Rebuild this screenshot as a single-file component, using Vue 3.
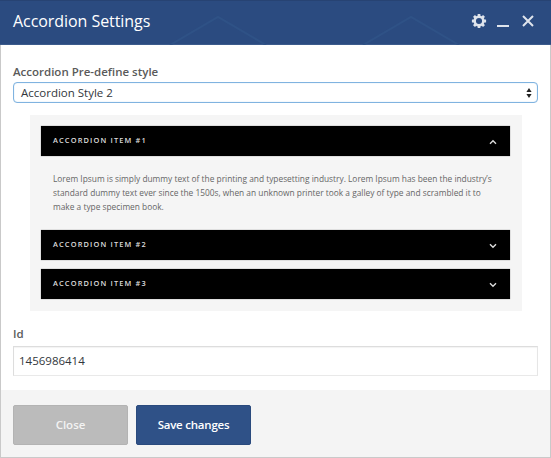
<script setup>
import { ref } from 'vue'

const preset = ref('Accordion Style 2')
const elementId = ref('1456986414')
const items = [
  {
    title: 'Accordion item #1',
    open: true,
    lines: [
      'Lorem Ipsum is simply dummy text of the printing and typesetting industry. Lorem Ipsum has been the industry’s',
      'standard dummy text ever since the 1500s, when an unknown printer took a galley of type and scrambled it to',
      'make a type specimen book.',
    ],
  },
  { title: 'Accordion item #2', open: false },
  { title: 'Accordion item #3', open: false },
]
const teeth = [0, 45, 90, 135, 180, 225, 270, 315]
</script>

<template>
  <section class="dialog">
    <header class="header">
      <svg class="pattern" viewBox="0 0 551 45" aria-hidden="true">
        <path d="M170 45 L218 17 L266 45 M363 45 L411 17 L459 45" />
      </svg>
      <h1 class="title">Accordion Settings</h1>
      <div class="controls">
        <svg class="gear" viewBox="-8 -8 16 16">
          <rect v-for="a in teeth" :key="a" x="-1.4" y="-7.1" width="2.8" height="3.2" rx=".5" :transform="`rotate(${a})`" />
          <circle r="4.3" />
        </svg>
        <svg class="minimize" viewBox="0 0 12 16"><path d="M0 13h12" /></svg>
        <svg class="dismiss" viewBox="0 0 12 16"><path d="M1 3l10 10M11 3L1 13" /></svg>
      </div>
    </header>

    <main class="body">
      <div class="label">Accordion Pre-define style</div>
      <div class="select">
        <span>{{ preset }}</span>
        <svg class="arrows" viewBox="0 0 6 10"><path d="M.4 4.1L3 0l2.600 4.100zM.4 5.900L3 10l2.600-4.100z" /></svg>
      </div>

      <div class="preview">
        <template v-for="item in items" :key="item.title">
          <div class="bar">
            <span class="bar-title">{{ item.title }}</span>
            <svg class="chevron" :class="{ up: item.open }" viewBox="0 0 8 6"><path d="M1 1.200l3 3 3-3" /></svg>
          </div>
          <div v-if="item.open" class="content">
            <div v-for="line in item.lines" :key="line">{{ line }}</div>
          </div>
        </template>
      </div>

      <div class="label id-label">Id</div>
      <div class="field">{{ elementId }}</div>
    </main>

    <footer class="footer">
      <button class="button close">Close</button>
      <button class="button save">Save changes</button>
    </footer>
  </section>
</template>

<style>
body {
  margin: 0;
  overflow: hidden;
}
</style>

<style scoped>
.dialog {
  width: 551px;
  height: 458px;
  box-sizing: border-box;
  display: flex;
  flex-direction: column;
  background: #fff;
  font-family: "Open Sans", sans-serif;
  color: #32373c;
}
.header {
  position: relative;
  height: 45px;
  box-sizing: border-box;
  padding: 0 17px 3px 13px;
  display: flex;
  align-items: center;
  justify-content: space-between;
  background: #2b4b80;
  border: 1px solid #274373;
  border-width: 1px 0;
  border-bottom-color: #3c5b8c;
}
.pattern {
  position: absolute;
  left: 0;
  top: -1px;
  width: 551px;
  height: 45px;
  fill: none;
  stroke: #2f5286;
  stroke-width: 2;
}
.title {
  position: relative;
  margin: 0;
  font-size: 16px;
  font-weight: 400;
  line-height: 24px;
  letter-spacing: -0.060px;
  color: #fff;
  white-space: nowrap;
}
.controls {
  position: relative;
  display: flex;
  align-items: center;
}
.controls svg {
  height: 16px;
  fill: none;
  stroke: #dfe4ec;
  stroke-width: 2;
}
.controls .gear { width: 16px; }
.gear rect {
  fill: #dfe4ec;
  stroke: none;
}
.gear circle { stroke-width: 2.500; }
.minimize {
  width: 12px;
  margin-left: 10px;
}
.dismiss {
  width: 12px;
  margin-left: 13px;
}
.body {
  height: 345px;
  box-sizing: border-box;
  padding: 18px 12px 0;
  border: 1px solid #c9c9c9;
  border-width: 0 1px;
}
.label {
  height: 19px;
  line-height: 17px;
  font-size: 11.500px;
  font-weight: 600;
  color: #5a5a5a;
}
.select {
  height: 21px;
  box-sizing: border-box;
  padding: 0 5px 0 7px;
  display: flex;
  align-items: center;
  justify-content: space-between;
  border: 1px solid #80b3e0;
  border-radius: 4px;
  box-shadow: inset 0 0 1px #8dc0ec;
  font-size: 11.500px;
  line-height: 18px;
}
.arrows {
  width: 6px;
  height: 10px;
  fill: #222;
}
.preview {
  height: 196px;
  box-sizing: border-box;
  margin: 12px 16px 0 17px;
  padding: 11px 12px 0 11px;
  background: #f5f5f5;
}
.bar {
  height: 30px;
  box-sizing: border-box;
  margin-bottom: 9px;
  padding: 0 13px 0 12px;
  display: flex;
  align-items: center;
  justify-content: space-between;
  background: #000;
  box-shadow: 0 0 1px #777;
  color: #ddd;
}
.bar-title {
  font-size: 7.400px;
  font-weight: 600;
  letter-spacing: 1.150px;
  line-height: 12px;
  padding-bottom: 2px;
  text-transform: uppercase;
}
.chevron {
  width: 8px;
  height: 6px;
  margin-top: 2px;
  fill: none;
  stroke: #ddd;
  stroke-width: 1.400;
}
.chevron.up { transform: rotate(180deg); }
.content {
  height: 58px;
  margin-top: -9px;
  padding: 16px 0 0 12px;
  font-size: 8.350px;
  line-height: 14.200px;
  color: #666;
  white-space: nowrap;
}
.id-label {
  margin-top: 15px;
  line-height: 16px;
}
.field {
  height: 30px;
  box-sizing: border-box;
  margin-top: 1px;
  padding: 0 5px;
  border: 1px solid #ddd;
  border-right-color: #e6e6e6;
  border-bottom-color: #e9e9e9;
  box-shadow: inset 0 1px 1px #f3f3f3;
  font-size: 11.500px;
  line-height: 28px;
}
.footer {
  height: 68px;
  box-sizing: border-box;
  padding: 15px 12px 0;
  display: flex;
  gap: 8px;
  background: #f4f4f4;
  border: 1px solid #c9c9c9;
  border-top: 0;
}
.button {
  width: 115px;
  height: 40px;
  padding: 0;
  border: 1px solid #b3b3b3;
  border-radius: 2px;
  background: #bbb;
  color: #f3f3f3;
  font: 600 11.500px/36px "Open Sans", sans-serif;
}
.save {
  border-color: #2a4a7d;
  background: #2f5187;
  color: #fff;
  letter-spacing: -0.220px;
}
</style>
